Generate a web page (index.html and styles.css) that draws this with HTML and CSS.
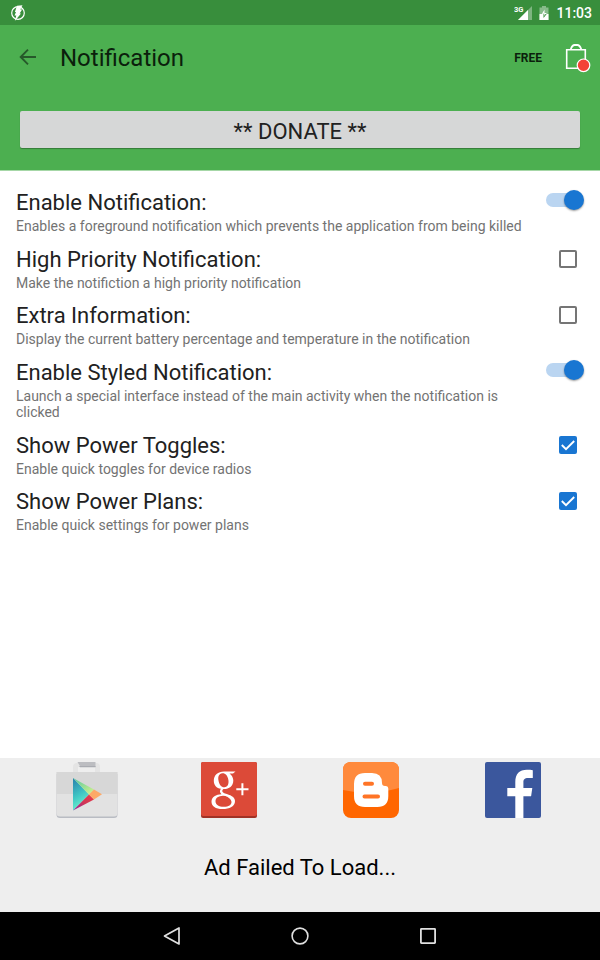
FILE: index.html
```
<!DOCTYPE html>
<html lang="en">
<head>
<meta charset="utf-8">
<title>Notification</title>
<link rel="stylesheet" href="styles.css">
</head>
<body>
<div class="status">
  <svg class="bolt" width="16" height="16" viewBox="0 0 16 16"><circle cx="8" cy="8" r="6.300" fill="none" stroke="#fff" stroke-width="1.200"/><path d="M7 .8L12.500 .2l-2.200 4.300h1.800L9.600 8.500h1.400L4.800 16l1.500-5.500H4.500L6 7H4.900z" fill="#fff"/></svg>
  <div class="status-right">
    <svg width="20" height="18" viewBox="0 0 20 18"><path d="M18 2v14H4z" fill="#fff" fill-opacity=".35"/><path d="M14 6v10H4z" fill="#fff"/><text class="network" x="0" y="7.500">3G</text></svg>
    <svg class="battery" width="10" height="16" viewBox="0 0 10 16"><path d="M3 1h4v1.500h2.500V15H.5V2.500H3z" fill="#fff" fill-opacity=".4"/><path d="M.5 9h9v6h-9z" fill="#fff"/><path d="M5.500 4.500L2.500 9.500h2V13L7.700 8H5.500z" fill="#fff"/><path d="M2.500 9h2v4L7.700 9H6.500L5.300 11V8.700z" fill="#388e3c"/></svg>
    <span class="clock">11:03</span>
  </div>
</div>
<header class="header">
  <div class="toolbar">
    <svg class="back" width="24" height="24" viewBox="0 0 24 24"><path d="M20 12H5M12 4.700L4.700 12l7.300 7.300" fill="none" stroke="#26592a" stroke-width="1.900"/></svg>
    <h1 class="title">Notification</h1>
    <span class="free">FREE</span>
    <svg class="bag" width="28" height="30" viewBox="0 0 28 30"><path d="M3.700 6.700h18.600v18.600H3.700z" fill="none" stroke="#fff" stroke-width="1.600"/><path d="M8 6.500V5.500Q9.500 2 11.500 2h3Q16.500 2 18 5.500v1" fill="none" stroke="#fff" stroke-width="1.800"/><circle cx="20.500" cy="22.300" r="6.300" fill="#f44336" stroke="#fff" stroke-width="1.200"/></svg>
  </div>
  <button class="donate">** DONATE **</button>
</header>
<main class="settings">
  <div class="row"><div class="label"><div class="name">Enable Notification:</div><div class="desc">Enables a foreground notification which prevents the application from being killed</div></div><span class="switch"></span></div>
  <div class="row"><div class="label"><div class="name">High Priority Notification:</div><div class="desc">Make the notifiction a high priority notification</div></div><span class="check"></span></div>
  <div class="row"><div class="label"><div class="name">Extra Information:</div><div class="desc">Display the current battery percentage and temperature in the notification</div></div><span class="check"></span></div>
  <div class="row"><div class="label"><div class="name">Enable Styled Notification:</div><div class="desc">Launch a special interface instead of the main activity when the notification is clicked</div></div><span class="switch"></span></div>
  <div class="row"><div class="label"><div class="name">Show Power Toggles:</div><div class="desc">Enable quick toggles for device radios</div></div><span class="check on"><svg width="18" height="18" viewBox="0 0 18 18"><path d="M2.800 9l4.200 4.200L15.200 5" fill="none" stroke="#fff" stroke-width="1.900"/></svg></span></div>
  <div class="row"><div class="label"><div class="name">Show Power Plans:</div><div class="desc">Enable quick settings for power plans</div></div><span class="check on"><svg width="18" height="18" viewBox="0 0 18 18"><path d="M2.800 9l4.200 4.200L15.200 5" fill="none" stroke="#fff" stroke-width="1.900"/></svg></span></div>
</main>
<footer class="footer">
  <div class="links">
    <svg width="64" height="58" viewBox="0 0 64 58">
      <path d="M18 10V5q0-4 4-4h19q4 0 4 4v5h-5V5H23v5z" fill="#e4e4e4"/><path d="M22.500 0h18v5h-15z" fill="#bcbdc1"/><path d="M24 4h16.500v1.300H25z" fill="#a9abb1"/>
      <path d="M1.500 12h61v40.500q0 3.500-3.500 3.500H5q-3.500 0-3.500-3.500z" fill="#b9bcc3"/>
      <path d="M1.500 10h61v41q0 3.500-3.500 3.500H5q-3.500 0-3.500-3.500z" fill="#e2e2e2"/><path d="M1.500 10h61v22h-61z" fill="#d7d7d7"/>
      <defs><linearGradient id="play-blue" x1="0" y1="0" x2=".3" y2="1"><stop offset="0" stop-color="#287fac"/><stop offset=".6" stop-color="#42c9c5"/><stop offset="1" stop-color="#6ff2ce"/></linearGradient><linearGradient id="play-green" x1="0" y1="0" x2="1" y2="1"><stop offset="0" stop-color="#55c6a0"/><stop offset="1" stop-color="#d7f58c"/></linearGradient><linearGradient id="play-red" x1="1" y1="0" x2="0" y2="1"><stop offset="0" stop-color="#ec3b48"/><stop offset=".5" stop-color="#cf3656"/><stop offset="1" stop-color="#8c1fa8"/></linearGradient></defs>
      <path d="M18 16l16 16.500L18 48.500z" fill="url(#play-blue)"/><path d="M18 16l21 11.500-5 5z" fill="url(#play-green)"/><path d="M34 32.500l5 5L18 48.500z" fill="url(#play-red)"/><path d="M39 27.500l8 4.800-8 5.200-5-5z" fill="#fda967"/>
    </svg>
    <svg width="56" height="56" viewBox="0 0 56 56"><rect width="56" height="56" rx="2" fill="#a13226"/><rect width="56" height="54" rx="2" fill="#dc4a38"/>
      <path fill="#fff" fill-rule="evenodd" d="M23 9.500H34.500L32 11.500H28.500C31 13.500 32.300 16 32.300 18.500 32.300 24.500 27.500 27.300 22.500 27 20.500 28.500 21 30.500 24 31.500 29 33 34 34.500 34 39 34 44.500 28.500 47 21.500 47 14.500 47 10.500 44.200 10.500 39.700 10.500 35 15 32.500 20.500 32.300 18.500 30.500 18.500 28.500 20 26.800 15.500 26.300 12.800 22.800 12.800 18.700 12.800 13.200 17 9.500 23 9.500zM21.300 11.200C18 11.500 16.800 14.500 17.500 18.500 18.200 22.700 20.500 25.500 23.500 25.300 26.700 25 28 22 27.400 18 26.700 13.500 24.300 11 21.300 11.200zM22 33.800C17.500 34 14.500 36 14.500 39.200 14.500 42.700 17.700 44.800 22.800 44.800 27.800 44.800 30.500 42.900 30.500 40 30.500 36.700 26.500 34.800 24.500 33.900z"/><path d="M35.300 27.200h12.200M41.400 21.200v12" stroke="#fff" stroke-width="2"/>
    </svg>
    <svg width="56" height="56" viewBox="0 0 56 56"><rect width="56" height="56" rx="8" fill="#ff6600"/><path d="M0 28V8Q0 0 8 0h40q8 0 8 8v18Q28 34 0 28z" fill="#ff8a3c"/><path d="M11 22q0-11 11-11h7q10 0 10 10 0 3 3 3h1q2.300 0 2.300 2.500V34q0 11-11 11H22q-11 0-11-11z" fill="#fff"/><path d="M22 21.800h7M21.500 34.500h13.500" stroke="#ff7426" stroke-width="4" stroke-linecap="round"/></svg>
    <svg width="56" height="56" viewBox="0 0 56 56"><rect width="56" height="56" rx="2" fill="#3b579d"/><path d="M30.300 56V34.300h-8V26h8v-6c0-8 4.200-12.200 11.500-12.200 2.700 0 4.200.1 6 .4V16h-4.500c-4 0-4.900 1.500-4.900 4.500V26h8.900l-1.200 8.300h-7.700V56z" fill="#fff"/></svg>
  </div>
  <div class="ad">Ad Failed To Load...</div>
</footer>
<nav class="nav">
  <svg width="24" height="24" viewBox="0 0 24 24"><path d="M4.500 12L19 4v16z" fill="none" stroke="#e0e0e0" stroke-width="1.700" stroke-linejoin="round"/></svg>
  <svg width="24" height="24" viewBox="0 0 24 24"><circle cx="12" cy="12" r="7.900" fill="none" stroke="#e0e0e0" stroke-width="1.600"/></svg>
  <svg width="24" height="24" viewBox="0 0 24 24"><rect x="4.900" y="4.900" width="14.200" height="14.200" rx=".5" fill="none" stroke="#e0e0e0" stroke-width="1.800"/></svg>
</nav>
</body>
</html>
```
FILE: styles.css
```
* { box-sizing: border-box; }
body { margin: 0; width: 600px; height: 960px; display: flex; flex-direction: column; background: #fff; font-family: Roboto, "Liberation Sans", sans-serif; color: #212121; overflow: hidden; }
svg { display: block; flex: none; }
.status { height: 25px; flex: none; background: #388e3c; display: flex; align-items: center; justify-content: space-between; padding: 0 8px 0 10px; }
.status-right { display: flex; align-items: center; }
.network { font-size: 7.500px; font-weight: 700; fill: #fff; }
.battery { margin: 0 7px 0 5px; }
.clock { color: #fff; font-size: 14px; font-weight: 500; line-height: 25px; padding-top: 1px; }
.header { height: 146px; flex: none; background: #4caf50; border-bottom: 1px solid #a6d7a7; }
.toolbar { height: 64px; display: flex; align-items: center; padding: 0 9px 0 16px; }
.title { margin: 1px 0 0 20px; flex: 1; font-size: 24px; font-weight: 400; line-height: 28px; color: #0b1f0c; }
.free { font-size: 12px; font-weight: 700; color: #0b1f0c; margin: 1px 21px 0 0; }
.bag { margin-top: 1px; }
.donate { display: block; width: 560px; height: 37px; margin: 22px 20px 0; padding: 2px 0 0; border: 0; border-radius: 2px; background: #d6d7d7; box-shadow: 0 1px 1px rgba(0, 0, 0, .3); font: 400 22px/37px Roboto, "Liberation Sans", sans-serif; color: #212121; }
.settings { flex: 1; padding: 17px 16px 0; }
.row { display: flex; justify-content: space-between; margin-bottom: 10px; }
.label { width: 512px; }
.name { font-size: 22px; line-height: 30px; }
.desc { font-size: 14px; line-height: 16.500px; color: #737373; }
.switch { position: relative; width: 38px; height: 20px; margin-top: 2px; }
.switch::before { content: ""; position: absolute; left: 0; top: 3px; width: 34px; height: 14px; border-radius: 7px; background: #bad5f1; }
.switch::after { content: ""; position: absolute; right: 0; top: 0; width: 20px; height: 20px; border-radius: 50%; background: #1976d2; box-shadow: 0 1px 2px rgba(0, 0, 0, .4); }
.check { width: 18px; height: 18px; margin: 5.400px 7px 0 0; border: 2px solid #757575; border-radius: 2px; }
.check.on { border: 0; background: #1976d2; }
.footer { height: 154px; flex: none; background: #eee; padding: 4px 16px 0; }
.links { display: grid; grid-template-columns: repeat(4, 1fr); justify-items: center; height: 60px; }
.ad { font-size: 22px; line-height: 26px; margin-top: 33px; text-align: center; color: #000; }
.nav { height: 48px; flex: none; background: #000; display: flex; justify-content: center; align-items: center; gap: 104px; }
```
